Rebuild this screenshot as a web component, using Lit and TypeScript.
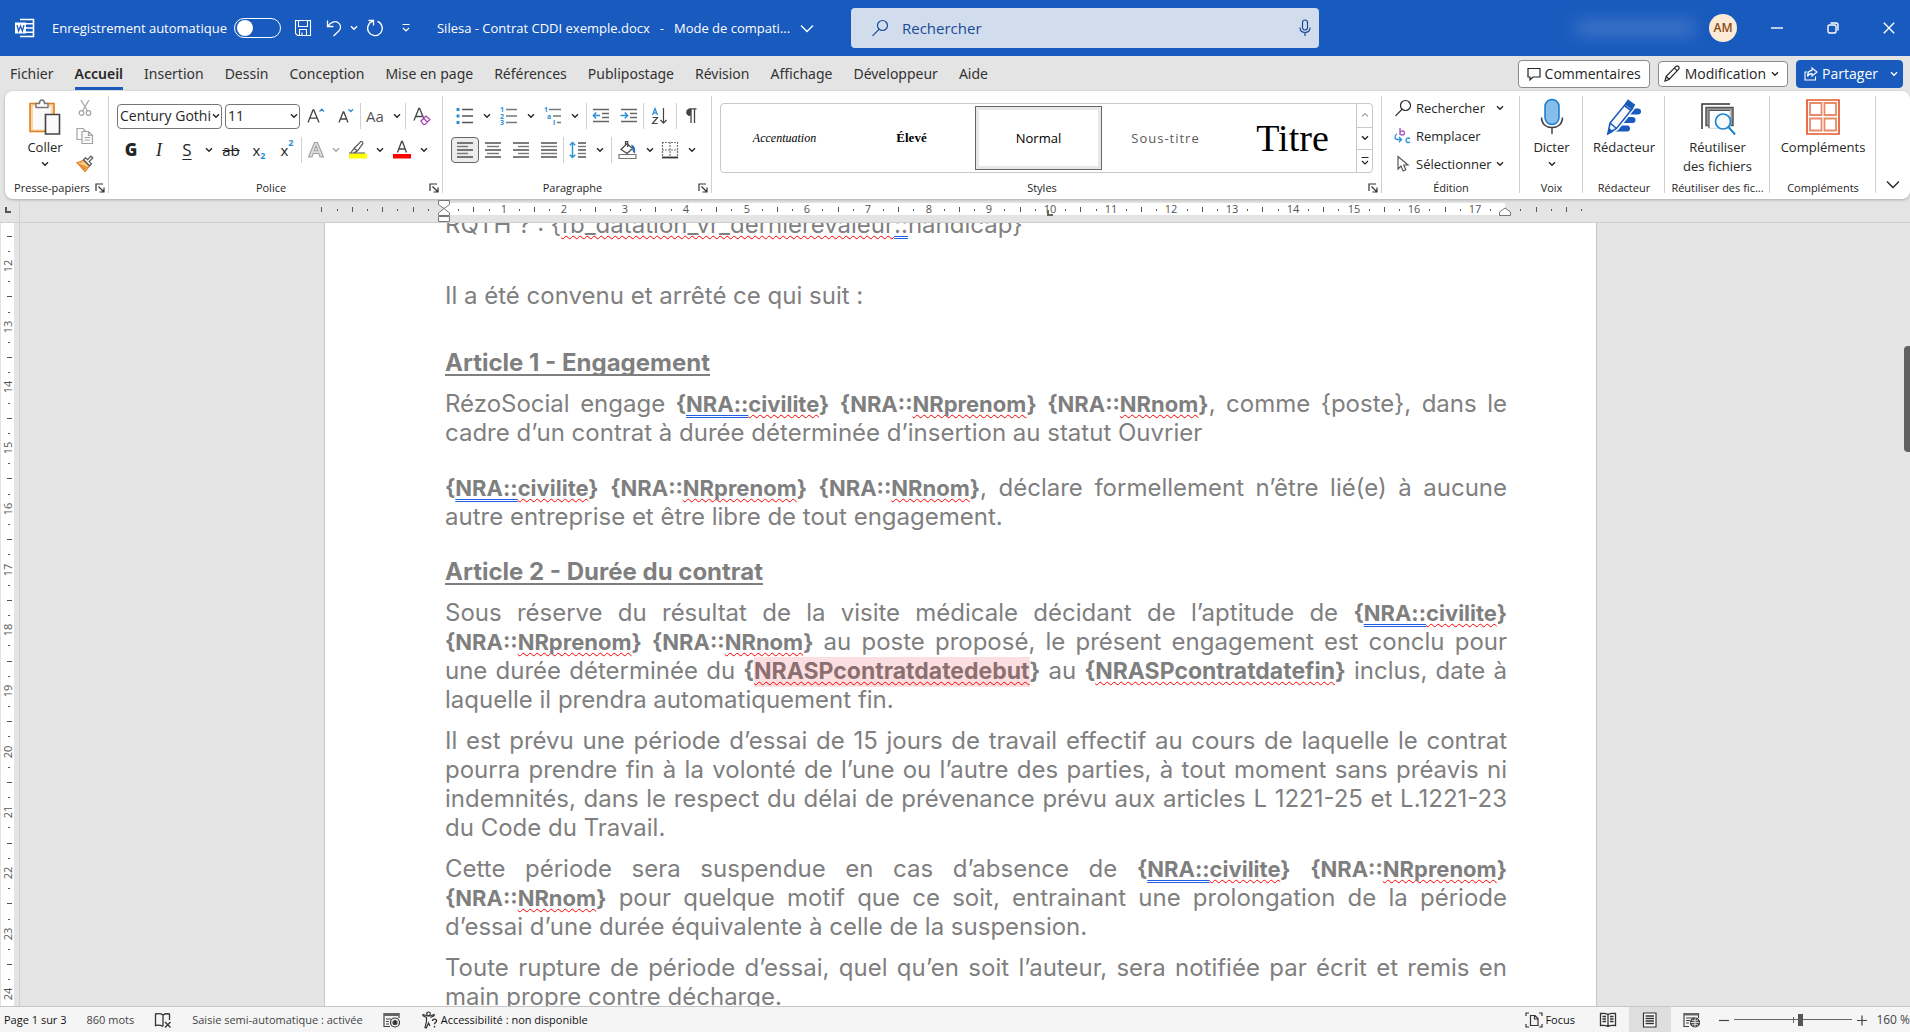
import { LitElement, html, svg, css, nothing, TemplateResult } from "lit";
import { customElement, state } from "lit/decorators.js";

/* ---------- icon helpers ---------- */

const icon = (w: number, h: number, body: unknown) =>
  html`<svg class="icon" width=${w} height=${h} viewBox="0 0 ${w} ${h}" fill="none" stroke="currentColor" stroke-width="1.2" aria-hidden="true">${body}</svg>`;

const chev = () => icon(8, 6, svg`<path d="M1 1.2 4 4.2 7 1.2" stroke-width="1.4"/>`);
const bigChev = () => icon(14, 9, svg`<path d="M1 1.5 7 7.5 13 1.5" stroke-width="1.4"/>`);

const wordLogo = icon(20, 20, svg`
  <path d="M5 1.5h13.5v17H5" stroke="#fff" stroke-width="1.6"/>
  <path d="M11 5.8h7M11 10h7M11 14.2h7" stroke="#fff" stroke-width="1.5"/>
  <rect x="0" y="4.5" width="11" height="11" fill="#fff" stroke="none"/>
  <path d="M2 7.2 3.6 13 5.5 8 7.4 13 9 7.2" stroke="#185abd" stroke-width="1.3"/>`);
const save = icon(18, 18, svg`<path d="M1.5 1.5h15v15H3.6L1.5 14.4zM4.5 1.5v6h9v-6M5.5 16.500v-6h7v6M8 16.500v-3" stroke-width="1.1"/>`);
const undo = icon(16, 18, svg`<path d="M1.500 1.500v6h6M1.800 7.200C4.500 3.500 9 1.500 12 3.500s3.500 6 .8 8.500L7.500 17" stroke-width="1.300"/>`);
const redo = icon(18, 18, svg`<path d="M2.500 1.500H7.500V6.500M11.500 2.400A7.300 7.300 0 1 1 7 2.200" stroke-width="1.300"/>`);
const customize = icon(10, 10, svg`<path d="M1.500 1.500h7M2 5l3 3 3-3" stroke-width="1.200"/>`);
const magnifier = icon(18, 18, svg`<circle cx="11.500" cy="6.500" r="5"/><path d="M8 10.300 1.500 16.800"/>`);
const micSmall = icon(12, 18, svg`<rect x="3.500" y="1" width="5" height="10" rx="2.500"/><path d="M1 8.500C1 12 3 13.500 6 13.500S11 12 11 8.500M6 13.500V17"/>`);
const minimise = icon(12, 12, svg`<path d="M0 6h12" stroke-width="1.400"/>`);
const restore = icon(12, 12, svg`<rect x="1" y="3" width="8" height="8" rx="1.500" stroke-width="1.400"/><path d="M3.500 1H9a2 2 0 0 1 2 2v5.500" stroke-width="1.400"/>`);
const closeIcon = icon(12, 12, svg`<path d="M.8.8 11.200 11.200M11.200.8.8 11.200" stroke-width="1.400"/>`);

const comment = icon(14, 14, svg`<path d="M1 1.500h12v8.500H6L3 12.800V10H1z"/>`);
const pen = icon(16, 17, svg`<path d="M1 16l1.200-4.600L11.800 1.700c1-1 2.700-.6 3.200.6.3.8.1 1.500-.5 2.100L5 14.500zM10.500 3.200l3 3M2.300 11.500l2.800 2.900"/>`);
const share = icon(14, 14, svg`<path d="M3.500 5H1v8h10.500V9.500M8 1l5 4-5 4V6.600C5.500 6.500 4.300 7.500 3.500 9.500 3.500 6 5 3.600 8 3.400z" stroke-width="1.100"/>`);

const paste = icon(34, 38, svg`
  <path d="M2 5.500h24v28H2z" fill="#fad7a0" stroke="#e07f1f" stroke-width="1.600"/>
  <path d="M5 8.500h18v23H5z" fill="#fafafa" stroke="none"/>
  <path d="M8 9.500V5.500h3.500C11.500 3.500 12.500 2 14 2s2.500 1.500 2.500 3.500H20v4z" fill="#fff" stroke="#777" stroke-width="1.400"/>
  <path d="M17.500 16.500h14v19.500h-14z" fill="#fbfbfb" stroke="#444" stroke-width="1.600"/>`);
const cut = icon(14, 18, svg`<g stroke="#a3a3a3"><path d="M3 1 9.500 12M11 1 4.500 12"/><circle cx="3.500" cy="14" r="2.300"/><circle cx="10.500" cy="14" r="2.300"/></g>`);
const copy = icon(18, 18, svg`<g stroke="#a3a3a3"><path d="M5.500 12.500H1V1.500h6l2.500 2.500"/><path d="M6 4.500h6.500L16.500 8.500v8H6zM12.500 4.500V8.500H16.500M8.500 10.500h5.500M8.500 13h5.500" fill="#fafafa"/></g>`);
const brush = icon(18, 18, svg`
  <path d="M1 7.500c4-.3 4.500-1 6.500-2.500l6 6C12 13 10.500 15 9 16.500z" fill="#f9c77f" stroke="#e07f1f"/>
  <path d="M3 9.500 12 13M5 12l5 2" stroke="#e07f1f"/>
  <path d="M7.500 4.800 13.600 10.800 15.500 8.800 13.200 6.600 16.800 3 15 1.200 11.600 4.600 9.500 2.900z" fill="#fff" stroke="#555"/>`);
const launcher = icon(10, 10, svg`<path d="M1 8V1H8M3.500 3.500 9 9M9 4.500V9H4.500" stroke-width="1.200" stroke="#333"/>`);

const bigA = (up: boolean) => up
  ? icon(18, 18, svg`<path d="M1 15.500 6 3h.8L12 15.500M3 11.200h7" stroke="#444" stroke-width="1.300"/><path d="M12.500 4.500 14.800 2.200 17 4.500" stroke="#2b8fd6" stroke-width="1.300"/>`)
  : icon(16, 18, svg`<path d="M1 15.500 5.200 5h.6L10 15.500M2.600 12h5.800" stroke="#444" stroke-width="1.300"/><path d="M10.500 2.200 12.800 4.500 15 2.200" stroke="#2b8fd6" stroke-width="1.300"/>`);
const clearFmt = icon(18, 18, svg`<path d="M1 13.500 5.800 1.500h.8L11 12M3 9.500h6" stroke="#444" stroke-width="1.300"/><path d="M8 14l5-5 4 3.500-5 5h-1.500zM10.500 11.500l4 3.500" stroke="#a33bb0" stroke-width="1.200" fill="#fff"/>`);
const outlineA = icon(18, 18, svg`<path d="M1.500 16 7.500 1.500h3L16.500 16h-3.400l-1.300-3.500H6.300L5 16zM7.300 9.800h3.500L9 5z" stroke="#a0a0a0" fill="#dcdcdc" stroke-width="1.100"/>`);
const highlighter = icon(20, 20, svg`<path d="M1 13.500h18v5H1z" fill="#ff0" stroke="none"/><path d="M3 12.500 6 8.500 12.500 1.800c1-1 3 .5 2.300 1.900L9.500 10.800 5.500 13M6 8.500l3.500 2.300M1 13h16" stroke="#555"/>`);
const fontColor = icon(20, 20, svg`<path d="M1 14h18v4.500H1z" fill="#f00" stroke="none"/><path d="M5.500 12.500 9.600 1.500h.8L14.500 12.500M7 9h6" stroke="#444" stroke-width="1.300"/>`);

const lines = (spans: Array<[number, number]>, x = 0) =>
  spans.map(([a, b], i) => svg`<path d="M${a + x} ${2 + i * 3.5}H${b + x}" stroke=${i % 2 ? "#777" : "#444"} stroke-width="1.400"/>`);
const bullets = icon(18, 18, svg`<g stroke="#555" stroke-width="1.300"><path d="M6 2.500h11M6 9h11M6 15.500h11"/></g><g fill="#2b8fd6" stroke="none"><path d="M.5 1h3v3h-3zM.5 7.500h3v3h-3zM.5 14h3v3h-3z"/></g>`);
const digit = (x: number, y: number, t: string) => svg`<text x=${x} y=${y} font-size="7" font-weight="700" fill="#2b8fd6" stroke="none">${t}</text>`;
const numbers = icon(18, 18, svg`<g stroke="#777" stroke-width="1.300"><path d="M6 2.500h11M6 9h11M6 15.500h11"/></g>${digit(0, 5, "1")}${digit(0, 11.5, "2")}${digit(0, 18, "3")}`);
const multi = icon(18, 18, svg`<g stroke="#777" stroke-width="1.300"><path d="M5 2.500h12M9 9h8M13 15.500h4"/></g>${digit(0, 5, "1")}${digit(3, 11.5, "a")}${digit(9, 18, "i")}`);
const indent = (out: boolean) => icon(18, 18, svg`<g stroke="#666" stroke-width="1.300"><path d="M1 2.500h16M10 6.500h7M10 10.500h7M1 14.500h16"/></g>
  ${out ? svg`<path d="M8 8.500H1.500M4.200 5.600 1.400 8.500 4.200 11.400" stroke="#2b8fd6" stroke-width="1.500"/>` : svg`<path d="M.5 8.500H7.500M4.800 5.600 7.600 8.500 4.800 11.400" stroke="#2b8fd6" stroke-width="1.500"/>`}`);
const sort = icon(18, 18, svg`<path d="M1.500 8 4 1.500 6.500 8M2.500 5.800h3" stroke="#2b8fd6" stroke-width="1.300"/><path d="M1.500 10.500h5L1.500 16.500h5.200M12.500 1v15M9.500 13l3 3.200 3-3.200" stroke="#444" stroke-width="1.200"/>`);
const pilcrow = icon(12, 18, svg`<path d="M5 8.500A3.500 3.500 0 0 1 5 1.800h6.500M6 2v14M9.500 2v14" stroke="#444" stroke-width="1.300"/><path d="M6 2H4.500a3.200 3.200 0 0 0 0 6.500H6z" fill="#444" stroke="none"/>`);
const alignL = icon(18, 18, svg`${lines([[1, 17], [1, 12], [1, 17], [1, 12], [1, 17]])}`);
const alignC = icon(18, 18, svg`${lines([[1, 17], [3, 15], [1, 17], [3, 15], [1, 17]])}`);
const alignR = icon(18, 18, svg`${lines([[1, 17], [6, 17], [1, 17], [6, 17], [1, 17]])}`);
const alignJ = icon(18, 18, svg`${lines([[1, 17], [1, 17], [1, 17], [1, 17], [1, 17]])}`);
const spacing = icon(18, 18, svg`${lines([[9, 17], [9, 17], [9, 17], [9, 17], [9, 17]])}<path d="M3.500 1.500v15M.8 4.300 3.500 1.500l2.700 2.800M.8 13.700 3.500 16.500l2.700-2.800" stroke="#2b8fd6" stroke-width="1.400"/>`);
const fill = icon(20, 20, svg`<path d="M1 14.500h17v4H1z" stroke="#777" fill="#fff"/><path d="M3 9.500 9 3.500l5.500 5L9 13.500zM7.500 5V1.500h2.200v5.500" stroke="#444"/><path d="M14 5.500c2 .8 3 3 2.500 7-1-.5-1.500-2-1.500-3z" fill="#2b8fd6" stroke="#2b6fb6"/>`);
const borders = icon(18, 18, svg`<path d="M1.500 1v15M9 1v15M16.500 1v15M1 1.500h16M1 9h16" stroke="#777" stroke-dasharray="2 1"/><path d="M1 16.500h16" stroke="#333" stroke-width="1.800"/>`);
const replace = icon(18, 18, svg`<path d="M6 1v7M6 5.500C6.500 3.500 10.500 3.500 10.500 6S6.500 8.500 6 6.500" stroke="#b05ac0" stroke-width="1.400"/><path d="M16 11.800c-1.500-1.500-4-.8-4 1.500s2.500 3 4 1.500" stroke="#2b8fd6" stroke-width="1.400"/><path d="M3 7C0 8.500.5 12.500 3.500 12.500H7M5 10l2.500 2.500L5 15.300" stroke="#2b8fd6" stroke-width="1.300"/>`);
const cursor = icon(14, 18, svg`<path d="M2 1.500v12.500l3-3 2.200 5 2.600-1.200L7.700 10H12z" stroke="#555" fill="#fff"/>`);

const micBig = icon(24, 38, svg`<rect x="5" y="1.500" width="14" height="25" rx="7" fill="#83beec" stroke="#1e78c8" stroke-width="1.500"/><path d="M1.500 19.500c0 6.500 4.500 10 10.500 10s10.500-3.500 10.500-10M12 29.500V36" stroke="#444" stroke-width="1.500"/>`);
const editor = icon(36, 38, svg`
  <path d="M20 10.500H32a3 3 0 0 1 0 6H17zM16 19H26.500a3 3 0 0 1 0 6H12zM11 27.500H21a3 3 0 0 1 0 6H5z" fill="#185abd" stroke="none"/>
  <path d="M2 35.500 4 25 20 5l6.500 5.500L11 30.500z" fill="#fff" stroke="#fff" stroke-width="4"/>
  <path d="M2 35.500 4 25 20 5.500l6.500 5L10.500 30.500zM18.500 7.500l6.500 5M4 25l6.500 5.500" fill="#fafafa" stroke="#185abd" stroke-width="1.600"/>
  <path d="M19.500 6 22 2.200l6.500 4.600-2.500 4z M2 36l1.500-5 3 2.500z" fill="#185abd" stroke="#185abd"/>`);
const reuse = icon(36, 38, svg`
  <path d="M2 31V6h28" stroke="#333" stroke-width="1.500"/><path d="M6 27.500V9.500h27v18z" fill="#999" stroke="#555" stroke-width="1.500"/>
  <path d="M9 30.500V12.500h21V30.500z" fill="#fff" stroke="#ddd" stroke-width="1.200"/><path d="M9 30V12.500h21" stroke="#555" stroke-width="1.200"/>
  <circle cx="23" cy="23.500" r="7.500" fill="#f5fafe" stroke="#1e86d0" stroke-width="1.700"/><path d="M28.500 29 35 36.500" stroke="#1e86d0" stroke-width="2"/>`);
const addins = icon(34, 36, svg`<g stroke="#e2582b"><path d="M1 1h32v34H1z" stroke-width="1.700"/><path d="M4 4h11.500v12H4zM18.500 4H30v12H18.500zM4 19.500h11.500v12H4zM18.500 19.500H30v12H18.500z" stroke="#ea8a68" stroke-width="1.800"/></g>`);

const proof = icon(18, 16, svg`<path d="M9 3v11M9 3C7 1.500 4 1.500 1.500 2v11.500C4 13 6.500 13 9 14.500M9 3c2-1.500 4-1.500 6.500-1v6M11 10l5.500 5.500M16.500 10 11 15.500" stroke="#333" stroke-width="1.300"/>`);
const macro = icon(18, 16, svg`<path d="M16 6V1.500H1v13h6" stroke="#444"/><path d="M1 1h15v3H1z" fill="#666" stroke="none"/><path d="M3 7h5M3 9.500h3M3 12h3" stroke="#444"/><circle cx="12" cy="10.500" r="4.500" stroke="#333"/><circle cx="12" cy="10.500" r="2" fill="#333"/>`);
const access = icon(18, 18, svg`<circle cx="7.500" cy="2.800" r="1.800" stroke="#333"/><path d="M1.500 4.500l4 2v4L4 16.500l1.300.4L7.500 12l1.500 3M13.500 4.500l-4 2M1.500 4.500l.6-1 4 1.500h3l4-1.500.4 1" stroke="#333"/><path d="M11.500 10c0-2.500 4-2.500 4 0 0 1.500-2 1.500-2 3.200M13.500 15v1.500" stroke="#333" stroke-width="1.400"/>`);
const focus = icon(18, 16, svg`<path d="M1 4V1h3M14 1h3v3M17 12v3h-3M4 15H1v-3" stroke="#333"/><path d="M5.500 3.500h4.500L13 6.500v7H5.500zM9.500 3.500V7H13" stroke="#333"/>`);
const book = icon(18, 16, svg`<path d="M9 2.500v12M9 2.500C7 1.200 4 1.200 1.500 1.500v12C4 13.200 7 13.200 9 14.500c2-1.300 5-1.300 7.500-1v-12c-2.500-.3-5.500-.3-7.500 1zM3.500 4.500H7M3.500 7H7M3.500 9.500H7M11 4.500h3.500M11 7h3.500M11 9.500h3.500" stroke="#333" stroke-width="1.300"/>`);
const printView = icon(16, 16, svg`<path d="M1.500 1h12.500v14H1.500z" stroke="#333" fill="#fff"/><path d="M3.500 4h8.500M3.500 6.500h8.500M3.500 9h8.500M3.500 11.500h8.500" stroke="#333" stroke-width="1.500"/>`);
const webView = icon(18, 16, svg`<path d="M15.500 6V1.500H1v13h5" stroke="#444"/><path d="M1 1h14.500v2.500H1z" fill="#666" stroke="none"/><path d="M3 6h9M3 8.500h4M3 11h3" stroke="#444"/><circle cx="12" cy="10.500" r="4.500" fill="#555" stroke="#333"/><path d="M7.500 10.500h9M12 6v9M9 8c2 1 4 1 6 0M9 13c2-1 4-1 6 0" stroke="#f5f5f5" stroke-width=".8"/>`);

/* ---------- document fragments ---------- */

const sp = (t: string) => html`<span class="spell">${t}</span>`;
const gr = (t: string) => html`<span class="gram">${t}</span>`;
const civ = html`<b>{${gr("NRA::")}${sp("civilite")}}</b>`;
const prenom = html`<b>{NRA::${sp("NRprenom")}}</b>`;
const nom = html`<b>{NRA::${sp("NRnom")}}</b>`;

const para = (cls: string, ...rows: unknown[]) =>
  html`<p class="para ${cls}">${rows.map((r, i) => html`<span class="line ${i < rows.length - 1 ? "full" : ""}">${r}</span>`)}</p>`;

const UNIT = 60.7;

@customElement("word-ruler")
class WordRuler extends LitElement {
  static styles = css`
    :host { display: block; width: 1271px; height: 24px; color: #555; }
    svg { display: block; overflow: visible; }
    text { font: 11px "Open Sans", sans-serif; fill: #555; text-anchor: middle; }
  `;
  render() {
    const zero = 118;
    const marks: TemplateResult[] = [];
    for (let q = -8; q <= 75; q++) {
      const x = Math.round(zero + (q * UNIT) / 4);
      if (q === 0 || q === 70) continue;
      if (q > 0 && q % 4 === 0 && q < 70) {
        marks.push(svg`<text x=${x} y="14">${q / 4}</text>` as TemplateResult);
      } else {
        marks.push((q % 2 === 0
          ? svg`<path d="M${x}.5 8v5" stroke="#555"/>`
          : svg`<path d="M${x}.5 10v2" stroke="#555"/>`) as TemplateResult);
      }
    }
    return html`<svg width="1271" height="24" role="img" aria-label="Règle">
      <rect x="119" y="4" width="1061" height="12" fill="#fff"></rect>
      ${marks}
      <g fill="#fff" stroke="#777">
        <path d="M113.500 1.500h11v4l-5.500 4-5.500-4zM113.500 16.500v-2.500l5.500-4.500 5.500 4.500v2.500zM113.500 17.500h11v5h-11z"/>
        <path d="M1174.500 16.500v-3.500l5.500-4 5.500 4v3.500z"/>
      </g>
      <path d="M723 11v5h5" fill="none" stroke="#666" stroke-width="2"/>
    </svg>`;
  }
}

@customElement("word-side-ruler")
class WordSideRuler extends LitElement {
  static styles = css`
    :host { display: block; width: 13px; margin-left: 1px; background: #fff; overflow: hidden; }
    svg { display: block; }
    text { font: 11px "Open Sans", sans-serif; fill: #555; text-anchor: middle; }
  `;
  render() {
    const marks: unknown[] = [];
    for (let q = -2; q <= 49; q++) {
      const y = Math.round(43 + (q * UNIT) / 4);
      if (q % 4 === 0) marks.push(svg`<text transform="translate(11 ${y}) rotate(-90)">${12 + q / 4}</text>`);
      else if (q % 2 === 0) marks.push(svg`<path d="M6 ${y}.5h5" stroke="#555"/>`);
      else marks.push(svg`<path d="M7 ${y}.5h2" stroke="#555"/>`);
    }
    return html`<svg width="13" height="783" aria-hidden="true">${marks}</svg>`;
  }
}

@customElement("app-root")
class AppRoot extends LitElement {
  @state() private tab = "Accueil";
  @state() private align = 0;

  static styles = css`
    :host { display: flex; flex-direction: column; height: 100vh; overflow: hidden; background: #e4e4e4; color: #262626; font: 14px/20px "Open Sans", "Noto Sans", sans-serif; }
    *, *::before { box-sizing: border-box; }
    button, input, select { font: inherit; color: inherit; margin: 0; }
    button { border: 0; background: none; padding: 0; display: inline-flex; align-items: center; justify-content: center; white-space: nowrap; }
    .icon { display: block; flex: none; overflow: visible; }
    text { font-family: "Open Sans", sans-serif; }

    .title { flex: none; display: grid; grid-template-columns: 851px minmax(200px, 468px) 1fr; align-items: center; height: 56px; background: #185abd; color: #fff; font-size: 13px; }
    .title-left { display: flex; align-items: center; padding-left: 15px; }
    .title-left .logo { width: 37px; }
    .auto { display: flex; align-items: center; gap: 7px; }
    .toggle { appearance: none; width: 47px; height: 20px; border: 1px solid #fff; border-radius: 10px; display: flex; align-items: center; padding: 0 2px; }
    .toggle::before { content: ""; width: 16px; height: 16px; border-radius: 50%; background: #fff; }
    .quick { display: flex; align-items: center; margin-left: 13px; }
    .q18 { width: 18px; }
    .q-gap { margin-left: 14px; }
    .q-small { margin-left: 8px; }
    .q-wide { margin-left: 17px; }
    .doc-name { display: flex; align-items: center; gap: 10px; margin-left: 26px; }
    .search { display: flex; align-items: center; gap: 13px; height: 40px; padding: 0 8px 0 20px; border-radius: 4px; background: #d1dced; color: #1b4a96; font-size: 15px; }
    .search input { flex: 1; min-width: 0; border: 0; background: none; outline: 0; padding: 0; }
    .search input::placeholder { color: #1b4a96; opacity: 1; }
    .title-right { display: flex; align-items: center; justify-content: flex-end; padding-right: 15px; }
    .hidden-name { width: 120px; height: 16px; margin-right: 14px; background: #3f74c8; filter: blur(8px); }
    .avatar { width: 28px; height: 28px; border-radius: 50%; background: #fce9d6; color: #8a4b14; font-size: 12px; font-weight: 600; margin-right: 6px; }
    .win { width: 44px; height: 56px; margin-left: 12px; }
    .win.last { width: 12px; margin-left: 28px; }

    .tabs { flex: none; display: flex; align-items: center; justify-content: space-between; height: 35px; padding: 0 7px 0 10px; font-size: 15px; }
    .tab-list { display: flex; gap: 21px; padding-top: 2px; }
    .tab { height: 30px; border-bottom: 3px solid transparent; border-top: 1px solid transparent; color: #333; font-family: "Noto Sans", sans-serif; font-size: 14px; }
    .tab.on { font-weight: 600; border-bottom-color: #185abd; color: #262626; }
    .actions { display: flex; align-items: center; gap: 8px; }
    .act { height: 28px; border: 1px solid #8a8a8a; border-radius: 4px; background: #fff; gap: 4px; padding: 0 8px; font-size: 14px; color: #262626; }
    .act.edit { padding: 0 8px 0 5px; height: 26px; gap: 5px; }
    .act.share { background: #185abd; border-color: #185abd; color: #fff; padding: 0 4px 0 7px; }
    .act .push { margin-left: 8px; display: inline-flex; }

    .ribbon { flex: none; display: grid; grid-template-columns: 104px 334px 269px minmax(400px, 1fr) 138px 63px 82px 105px 106px 34px; height: 108px; margin-left: 5px; background: #fff; border-radius: 8px; box-shadow: 0 1px 3px rgba(0, 0, 0, 0.25); }
    .group { display: flex; flex-direction: column; min-width: 0; background: linear-gradient(#d0d0d0, #d0d0d0) right 5px / 1px 97px no-repeat; }
    .body { height: 88px; }
    .foot { display: flex; align-items: center; height: 18px; padding: 0 4px; font-size: 11px; color: #262626; }
    .foot span { flex: 1; text-align: center; white-space: nowrap; }
    .rows { display: flex; flex-direction: column; gap: 6px; padding: 11px 0 0 8px; }
    .row { display: flex; align-items: center; height: 28px; }
    .w12 { width: 12px; } .w16 { width: 16px; } .w28 { width: 28px; } .w32 { width: 32px; }
    .row button { height: 26px; flex: none; }
    .sep { width: 1px; height: 26px; background: #d0d0d0; flex: none; }
    .sep.lead { margin-left: 3px; }
    .combo { display: grid; align-items: center; height: 25px; margin-right: 3px; border: 1px solid #767676; border-radius: 4px; background: #fff; }
    .combo.font { width: 105px; } .combo.size { width: 75px; margin-right: 0; }
    .combo select { grid-area: 1 / 1; appearance: none; border: 0; background: none; width: 100%; height: 23px; padding: 0 8px 0 2px; font-size: 14px; color: #262626; }
    .combo .icon { grid-area: 1 / 1; justify-self: end; margin-right: 1px; pointer-events: none; }
    .g-bold { font-weight: 800; font-size: 17px; } .g-ital { font: italic 18px "Liberation Serif", serif; }
    .g-under { text-decoration: underline; text-underline-offset: 3px; font-size: 17px; }
    .g-strike { text-decoration: line-through; font-size: 15px; }
    .g-x { font-size: 15px; } .g-x small { font-size: 9px; font-weight: 700; color: #2b8fd6; }
    .g-x .lo { align-self: flex-end; line-height: 14px; } .g-x .hi { align-self: flex-start; line-height: 12px; }
    .g-case { font-size: 15px; color: #555; }
    .muted { color: #a8a8a8; }
    .picked { border: 1px solid #666; border-radius: 4px; background: #ececec; }

    .clip { display: grid; grid-template-columns: 56px 24px; padding: 3px 0 0 12px; }
    .stack { display: flex; flex-direction: column; }
    .stack button { height: 28px; }
    .big { display: flex; flex-direction: column; align-items: center; justify-content: flex-start; width: 100%; padding-top: 7px; font-size: 13px; line-height: 19px; color: #262626; }
    .big > .icon { height: 38px; margin-bottom: 2px; }
    .clip .big { padding-top: 4px; }
    .big .under { margin-top: 4px; }
    .edit-list { display: flex; flex-direction: column; padding: 3px 0 0 12px; }
    .edit-list button { height: 28px; gap: 4px; justify-content: flex-start; font-size: 13px; }
    .edit-list .i18 { width: 18px; display: flex; justify-content: center; }
    .edit-list .far { margin-left: 7px; }

    .styles-body { padding: 12px 9px 0 8px; }
    .gallery { display: grid; grid-template-columns: repeat(5, minmax(0, 1fr)) 16px; height: 70px; border: 1px solid #c8c8c8; border-radius: 4px; overflow: hidden; }
    .style { color: #000; margin: 2px 0; }
    .style.em { font: italic 12px "Liberation Serif", serif; }
    .style.strong { font: bold 13px "Liberation Serif", serif; }
    .style.normal { font-size: 13px; border: 1px solid #666; box-shadow: inset 0 0 0 3px #e8e8e8; }
    .style.subtitle { font-size: 13px; color: #5a5a5a; letter-spacing: 1px; }
    .style.heading { font-family: "Liberation Serif", serif; font-size: 38px; }
    .gal-nav { display: grid; grid-template-rows: 1fr 1fr 1fr; border-left: 1px solid #c8c8c8; }
    .gal-nav button + button { border-top: 1px solid #c8c8c8; }
    .collapse { display: flex; align-items: flex-end; justify-content: center; padding-bottom: 10px; }

    .ruler-row { flex: none; display: grid; grid-template-columns: 20px 1fr 9px; height: 24px; border-bottom: 1px solid #cfcfcf; }
    .corner { border-right: 1px solid #d0d0d0; padding: 8px 0 0 5px; color: #555; }
    .center { display: flex; justify-content: center; overflow: hidden; }
    .work { flex: 1; min-height: 0; display: grid; grid-template-columns: 20px 1fr 9px; }
    .side { display: flex; border-right: 1px solid #d0d0d0; overflow: hidden; }
    .page { width: 1273px; flex: none; background: #fff; border: 1px solid #c6c6c6; border-width: 0 1px; padding: 0 89px 0 120px; overflow: hidden; }
    .bar { padding-top: 123px; display: flex; justify-content: flex-end; align-items: flex-start; }
    .thumb { width: 6px; height: 106px; border-radius: 4px 0 0 4px; background: #606060; }

    .para { margin: 0 0 12px; font: 24px/29px Inter, "Open Sans", sans-serif; color: #7f7f7f; }
    .para.first { margin: -13px 0 42px; }
    .para.m38 { margin-bottom: 38px; } .para.m26 { margin-bottom: 26px; }
    .para.h { font-weight: 700; text-decoration: underline; text-decoration-thickness: 2px; text-underline-offset: 3px; text-decoration-skip-ink: none; }
    .para b { font-size: 22px; line-height: 1px; }
    .para b.wide { font-size: 23px; }
    .line { display: block; white-space: nowrap; }
    .line.full { text-align: justify; text-align-last: justify; white-space: normal; }
    .spell { text-decoration: underline wavy #f00 1px; text-decoration-skip-ink: none; text-underline-offset: 2px; }
    .gram { text-decoration: underline double #2060e0 1px; text-decoration-skip-ink: none; text-underline-offset: 3px; }
    mark { background: #fcdfe0; color: #8b6f71; padding-bottom: 2px; }

    .status { flex: none; display: flex; align-items: center; justify-content: space-between; height: 26px; border-top: 1px solid #c6c6c6; background: #f5f5f5; font-size: 11px; color: #444; padding-left: 4px; white-space: nowrap; }
    .status div { display: flex; align-items: center; height: 25px; }
    .status .st-left { gap: 20px; }
    .dark { color: #111; gap: 2px; }
    .focus { margin-right: 12px; }
    .view { width: 42px; height: 25px; }
    .view.on { background: #dedede; }
    .zoomer { width: 10px; height: 25px; }
    .view + .zoomer { margin-left: 6px; }
    .range { appearance: none; width: 118px; height: 12px; margin: 0 5px; background: linear-gradient(#666, #666) 59px 50% / 1px 6px no-repeat, linear-gradient(#666, #666) 0 50% / 100% 1px no-repeat; }
    .range::-webkit-slider-thumb { appearance: none; width: 5px; height: 12px; background: #555; }
    .pct { width: 43px; justify-content: flex-end; font-size: 12px; }
  `;

  private btn(cls: string, label: string, content: unknown) {
    return html`<button class=${cls} aria-label=${label}>${content}</button>`;
  }

  private drop(cls: string, label: string) {
    return html`<button class=${cls} aria-label=${"Options : " + label}>${chev()}</button>`;
  }

  private foot(label: string, launch = false) {
    return html`<div class="foot"><span>${label}</span>${launch ? this.btn("", "Paramètres : " + label, launcher) : nothing}</div>`;
  }

  private titleBar() {
    return html`<header class="title">
      <div class="title-left">
        <div class="logo">${wordLogo}</div>
        <label class="auto">Enregistrement automatique<input class="toggle" type="checkbox" role="switch" /></label>
        <div class="quick">
          ${this.btn("q18", "Enregistrer", save)}
          ${this.btn("q-gap", "Annuler", undo)}
          ${this.drop("q-small", "Annuler")}
          ${this.btn("q-small", "Rétablir", redo)}
          ${this.btn("q-wide", "Personnaliser", customize)}
        </div>
        <button class="doc-name"><span>Silesa - Contrat CDDI exemple.docx</span><span>-</span><span>Mode de compati...</span>${bigChev()}</button>
      </div>
      <div class="search">${magnifier}<input type="text" placeholder="Rechercher" aria-label="Rechercher" />${this.btn("", "Recherche vocale", micSmall)}</div>
      <div class="title-right">
        <div class="hidden-name"></div>
        <button class="avatar">AM</button>
        ${this.btn("win", "Réduire", minimise)}${this.btn("win", "Restaurer", restore)}${this.btn("win last", "Fermer", closeIcon)}
      </div>
    </header>`;
  }

  private tabsRow() {
    const names = ["Fichier", "Accueil", "Insertion", "Dessin", "Conception", "Mise en page", "Références", "Publipostage", "Révision", "Affichage", "Développeur", "Aide"];
    return html`<nav class="tabs">
      <div class="tab-list">${names.map((n) => html`<button class="tab ${n === this.tab ? "on" : ""}" @click=${() => (this.tab = n)}>${n}</button>`)}</div>
      <div class="actions">
        <button class="act">${comment}Commentaires</button>
        <button class="act edit">${pen}Modification${chev()}</button>
        <button class="act share">${share}Partager<span class="push">${chev()}</span></button>
      </div>
    </nav>`;
  }

  private ribbon() {
    const b = this.btn;
    const aligns: Array<[string, unknown]> = [["Aligner à gauche", alignL], ["Centrer", alignC], ["Aligner à droite", alignR], ["Justifier", alignJ]];
    return html`<div class="ribbon">
      <section class="group">
        <div class="body clip">
          <button class="big">${paste}<span>Coller</span><span class="under">${chev()}</span></button>
          <div class="stack">${b("w24", "Couper", cut)}${b("w24", "Copier", copy)}${b("w24", "Reproduire la mise en forme", brush)}</div>
        </div>
        ${this.foot("Presse-papiers", true)}
      </section>
      <section class="group">
        <div class="body rows">
          <div class="row">
            <label class="combo font"><select aria-label="Police"><option>Century Gothi</option></select>${chev()}</label>
            <label class="combo size"><select aria-label="Taille"><option>11</option></select>${chev()}</label>
            ${b("w32", "Agrandir", bigA(true))}${b("w28", "Réduire", bigA(false))}<i class="sep"></i>
            ${b("w28 g-case", "Casse", "Aa")}${this.drop("w16", "Casse")}<i class="sep"></i>${b("w32", "Effacer", clearFmt)}
          </div>
          <div class="row">
            ${b("w28 g-bold", "Gras", "G")}${b("w28 g-ital", "Italique", "I")}${b("w28 g-under", "Souligné", "S")}${this.drop("w16", "Souligné")}
            ${b("w28 g-strike", "Barré", "ab")}${b("w28 g-x", "Indice", html`x<small class="lo">2</small>`)}${b("w28 g-x", "Exposant", html`x<small class="hi">2</small>`)}<i class="sep"></i>
            ${b("w28", "Effets", outlineA)}${this.drop("w12 muted", "Effets")}${b("w32", "Surlignage", highlighter)}${this.drop("w12", "Surlignage")}
            ${b("w32", "Couleur", fontColor)}${this.drop("w12", "Couleur")}
          </div>
        </div>
        ${this.foot("Police", true)}
      </section>
      <section class="group">
        <div class="body rows">
          <div class="row">
            ${b("w28", "Puces", bullets)}${this.drop("w16", "Puces")}${b("w28", "Numérotation", numbers)}${this.drop("w16", "Numérotation")}
            ${b("w28", "Liste à niveaux", multi)}${this.drop("w16", "Liste")}<i class="sep lead"></i>
            ${b("w28", "Diminuer le retrait", indent(true))}${b("w28", "Augmenter le retrait", indent(false))}<i class="sep"></i>
            ${b("w32", "Trier", sort)}<i class="sep"></i>${b("w28", "Afficher tout", pilcrow)}
          </div>
          <div class="row">
            ${aligns.map(([l, ic], i) => html`<button class="w28 ${i === this.align ? "picked" : ""}" aria-label=${l} @click=${() => (this.align = i)}>${ic}</button>`)}<i class="sep"></i>
            ${b("w28", "Interligne", spacing)}${this.drop("w16", "Interligne")}<i class="sep lead"></i>
            ${b("w32", "Trame", fill)}${this.drop("w12", "Trame")}${b("w28", "Bordures", borders)}${this.drop("w16", "Bordures")}
          </div>
        </div>
        ${this.foot("Paragraphe", true)}
      </section>
      <section class="group">
        <div class="body styles-body">
          <div class="gallery">
            <button class="style em">Accentuation</button><button class="style strong">Élevé</button><button class="style normal">Normal</button>
            <button class="style subtitle">Sous-titre</button><button class="style heading">Titre</button>
            <div class="gal-nav">${b("muted", "Haut", icon(8, 6, svg`<path d="M1 4.500 4 1.500 7 4.500"/>`))}${b("", "Bas", chev())}${b("", "Plus", customize)}</div>
          </div>
        </div>
        ${this.foot("Styles", true)}
      </section>
      <section class="group">
        <div class="body edit-list">
          <button><span class="i18">${magnifier}</span>Rechercher<span class="far">${chev()}</span></button>
          <button><span class="i18">${replace}</span>Remplacer</button>
          <button><span class="i18">${cursor}</span>Sélectionner${chev()}</button>
        </div>
        ${this.foot("Édition")}
      </section>
      <section class="group"><div class="body"><button class="big">${micBig}<span>Dicter</span><span class="under">${chev()}</span></button></div>${this.foot("Voix")}</section>
      <section class="group"><div class="body"><button class="big">${editor}<span>Rédacteur</span></button></div>${this.foot("Rédacteur")}</section>
      <section class="group"><div class="body"><button class="big">${reuse}<span>Réutiliser<br />des fichiers</span></button></div>${this.foot("Réutiliser des fic...")}</section>
      <section class="group"><div class="body"><button class="big">${addins}<span>Compléments</span></button></div>${this.foot("Compléments")}</section>
      <button class="collapse" aria-label="Réduire le ruban">${bigChev()}</button>
    </div>`;
  }

  private page() {
    return html`<article class="page">
      ${para("first", html`RQTH ? : {${sp("fb_datation_vr_dernierevaleur")}${gr("::")}handicap}`)}
      ${para("m38", "Il a été convenu et arrêté ce qui suit :")}
      ${para("h", "Article 1 - Engagement")}
      ${para("m26", html`RézoSocial engage ${civ} ${prenom} ${nom}, comme {poste}, dans le`, "cadre d’un contrat à durée déterminée d’insertion au statut Ouvrier")}
      ${para("m26", html`${civ} ${prenom} ${nom}, déclare formellement n’être lié(e) à aucune`, "autre entreprise et être libre de tout engagement.")}
      ${para("h", "Article 2 - Durée du contrat")}
      ${para("", html`Sous réserve du résultat de la visite médicale décidant de l’aptitude de ${civ}`,
        html`${prenom} ${nom} au poste proposé, le présent engagement est conclu pour`,
        html`une durée déterminée du <b class="wide">{<mark>${sp("NRASPcontratdatedebut")}</mark>}</b> au <b class="wide">{${sp("NRASPcontratdatefin")}}</b> inclus, date à`,
        "laquelle il prendra automatiquement fin.")}
      ${para("", "Il est prévu une période d’essai de 15 jours de travail effectif au cours de laquelle le contrat",
        "pourra prendre fin à la volonté de l’une ou l’autre des parties, à tout moment sans préavis ni",
        "indemnités, dans le respect du délai de prévenance prévu aux articles L 1221-25 et L.1221-23",
        "du Code du Travail.")}
      ${para("", html`Cette période sera suspendue en cas d’absence de ${civ} ${prenom}`,
        html`${nom} pour quelque motif que ce soit, entrainant une prolongation de la période`,
        "d’essai d’une durée équivalente à celle de la suspension.")}
      ${para("", "Toute rupture de période d’essai, quel qu’en soit l’auteur, sera notifiée par écrit et remis en", "main propre contre décharge.")}
    </article>`;
  }

  private statusBar() {
    return html`<footer class="status">
      <div class="st-left">
        <button class="dark">Page 1 sur 3</button><button>860 mots</button>${this.btn("", "Vérification", proof)}
        <button>Saisie semi-automatique : activée</button>${this.btn("", "Macro", macro)}
        <button class="dark">${access}Accessibilité : non disponible</button>
      </div>
      <div>
        <button class="dark focus">${focus}Focus</button>
        ${this.btn("view", "Mode Lecture", book)}${this.btn("view on", "Mode Page", printView)}${this.btn("view", "Mode Web", webView)}
        ${this.btn("zoomer", "Zoom arrière", icon(10, 10, svg`<path d="M0 5.500h10"/>`))}
        <input class="range" type="range" min="0" max="100" value="57" aria-label="Zoom" />
        ${this.btn("zoomer", "Zoom avant", icon(10, 10, svg`<path d="M0 5.500h10M5 .5v10"/>`))}
        <button class="pct">160 %</button>
      </div>
    </footer>`;
  }

  render() {
    return html`
      ${this.titleBar()} ${this.tabsRow()} ${this.ribbon()}
      <div class="ruler-row">
        <div class="corner">${icon(6, 6, svg`<path d="M1 0v5h5" stroke-width="2"/>`)}</div>
        <div class="center"><word-ruler></word-ruler></div>
      </div>
      <main class="work">
        <div class="side"><word-side-ruler></word-side-ruler></div>
        <div class="center">${this.page()}</div>
        <div class="bar"><div class="thumb"></div></div>
      </main>
      ${this.statusBar()}
    `;
  }
}
